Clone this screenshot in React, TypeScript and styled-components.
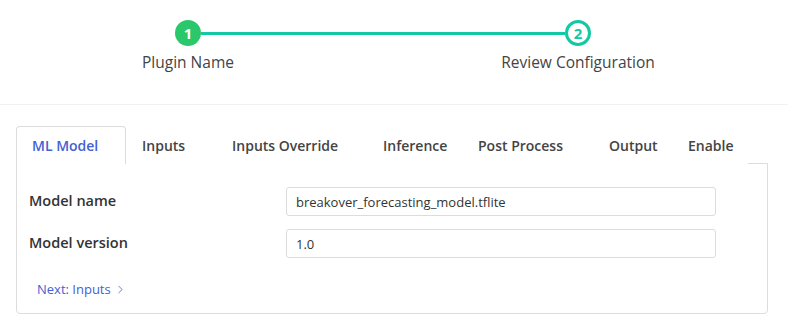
import React from 'react';
import styled, { createGlobalStyle } from 'styled-components';
import { ChevronRight } from 'lucide-react';

const GlobalStyle = createGlobalStyle`
    body {
        margin: 0;
        background: #ffffff;
        font-family: 'Open Sans', 'Noto Sans', sans-serif;
        color: #444;
    }
`;

const Header = styled.div`
    height: 105px;
    border-bottom: 1px solid #f1f1f1;
    box-sizing: border-box;
    padding-top: 20px;
`;

const StepRow = styled.div`
    display: flex;
    align-items: center;
    padding-left: 175px;
`;

const Circle = styled.div<{ $done?: boolean }>`
    width: 26px;
    height: 26px;
    box-sizing: border-box;
    border-radius: 50%;
    display: flex;
    align-items: center;
    justify-content: center;
    font-size: 15px;
    font-weight: 700;
    background: ${(p) => (p.$done ? '#2ac86a' : '#ffffff')};
    color: ${(p) => (p.$done ? '#ffffff' : '#12c9a4')};
    border: ${(p) => (p.$done ? 'none' : '3px solid #12c9a4')};
`;

const Connector = styled.div`
    width: 364px;
    height: 3px;
    background: #12c9a4;
`;

const LabelRow = styled.div`
    display: flex;
    gap: 210px;
    padding-left: 98px;
    margin-top: 6px;
`;

const StepLabel = styled.div`
    width: 180px;
    text-align: center;
    font-size: 15.5px;
    line-height: 20px;
    color: #444;
`;

const Body = styled.div`
    padding: 21px 20px 0 16px;
`;

const TabBar = styled.div`
    display: flex;
    width: 732px;
    height: 38px;
    box-sizing: border-box;
    border-bottom: 2px solid #e4e4e4;
    position: relative;
    z-index: 1;
    margin-bottom: -1px;
`;

const Tab = styled.div<{ $active?: boolean; $w: number }>`
    width: ${(p) => p.$w}px;
    box-sizing: border-box;
    padding-left: 15px;
    display: flex;
    align-items: center;
    font-size: 14px;
    font-weight: 600;
    color: ${(p) => (p.$active ? '#4361d3' : '#444')};
    background: #fff;
    border: 1px solid ${(p) => (p.$active ? '#dcdcdc' : 'transparent')};
    border-bottom: none;
    border-radius: 4px 4px 0 0;
    height: 38px;
    margin-bottom: -2px;
    white-space: nowrap;
`;

const Panel = styled.div`
    border: 1px solid #dcdcdc;
    border-radius: 0 0 4px 4px;
    padding: 23px 51px 14px 12px;
    width: 752px;
    box-sizing: border-box;
`;

const FormGrid = styled.div`
    display: grid;
    grid-template-columns: 257px 430px;
    row-gap: 13px;
    align-items: center;
`;

const FieldLabel = styled.div`
    font-size: 14.5px;
    font-weight: 600;
    color: #333;
    margin-top: -3px;
`;

const Input = styled.input`
    height: 29px;
    box-sizing: border-box;
    border: 1px solid #dcdcdc;
    border-radius: 3px;
    padding: 0 9px;
    font-family: inherit;
    font-size: 13px;
    color: #333;
    outline: none;
`;

const NextLink = styled.a`
    display: inline-flex;
    align-items: center;
    gap: 3px;
    margin-top: 22px;
    margin-left: 8px;
    font-size: 13px;
    line-height: 18px;
    color: #4361d3;
    text-decoration: none;
`;

const tabs = [
    { name: 'ML Model', w: 110 },
    { name: 'Inputs', w: 90 },
    { name: 'Inputs Override', w: 151 },
    { name: 'Inference', w: 95 },
    { name: 'Post Process', w: 131 },
    { name: 'Output', w: 79 },
    { name: 'Enable', w: 76 },
];

const App = () => {
    return (
        <>
            <GlobalStyle />
            <Header>
                <StepRow>
                    <Circle $done>1</Circle>
                    <Connector />
                    <Circle>2</Circle>
                </StepRow>
                <LabelRow>
                    <StepLabel>Plugin Name</StepLabel>
                    <StepLabel>Review Configuration</StepLabel>
                </LabelRow>
            </Header>
            <Body>
                <TabBar>
                    {tabs.map((t, i) => (
                        <Tab key={t.name} $w={t.w} $active={i === 0}>
                            {t.name}
                        </Tab>
                    ))}
                </TabBar>
                <Panel>
                    <FormGrid>
                        <FieldLabel>Model name</FieldLabel>
                        <Input defaultValue="breakover_forecasting_model.tflite" />
                        <FieldLabel>Model version</FieldLabel>
                        <Input defaultValue="1.0" />
                    </FormGrid>
                    <NextLink href="#">
                        Next: Inputs <ChevronRight size={13} strokeWidth={1.5} />
                    </NextLink>
                </Panel>
            </Body>
        </>
    );
};

export default App;
